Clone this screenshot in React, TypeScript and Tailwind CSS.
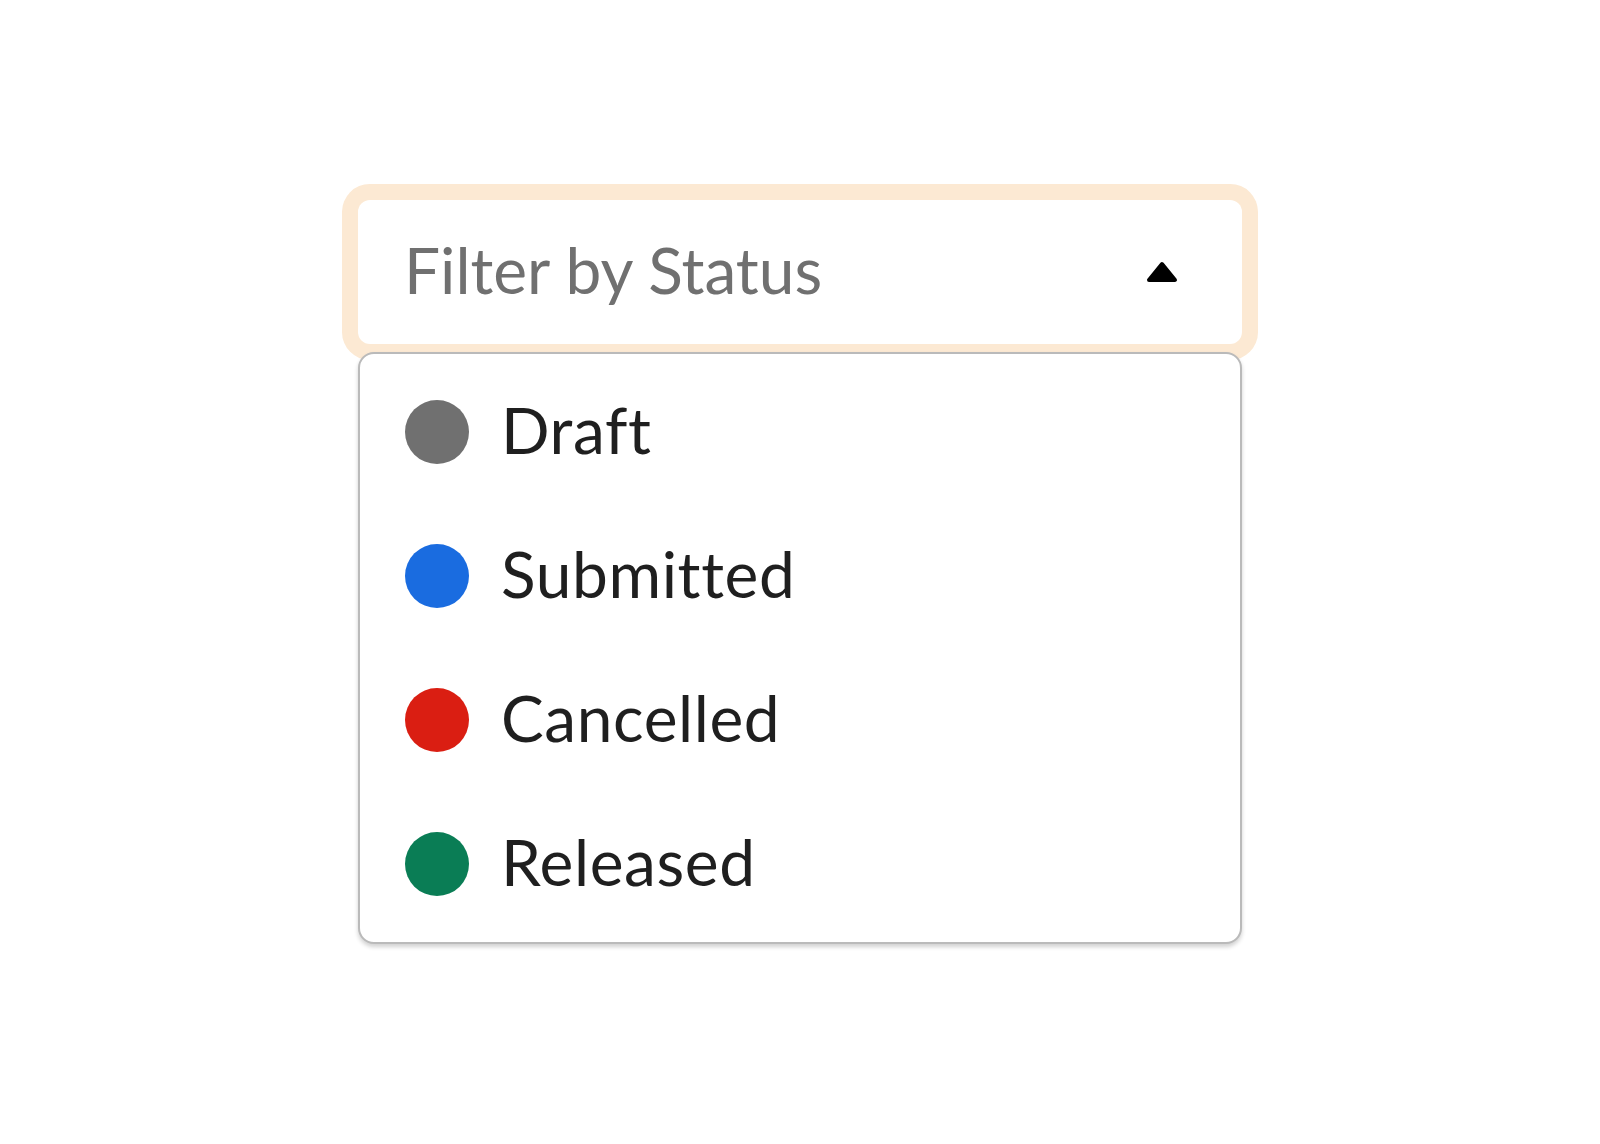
import React from "react";

const statuses = [
  { label: "Draft", dot: "bg-[#707070]" },
  { label: "Submitted", dot: "bg-[#1a6ce0]" },
  { label: "Cancelled", dot: "bg-[#da1e12]" },
  { label: "Released", dot: "bg-[#0a7d55]" },
];

const App = () => {
  return (
    <div className="min-h-screen bg-white pt-[200px] flex justify-center font-['Lato',sans-serif]">
      <div className="w-[884px]">
        <button className="w-full h-[144px] rounded-xl bg-white shadow-[0_0_0_16px_#fce9d3] flex items-center justify-between pl-[46px] pr-16">
          <span className="text-[64px] text-[#707070] leading-none pb-1">Filter by Status</span>
          <svg width="32" height="22" viewBox="0 0 32 22">
            <polygon points="16,3 29,19 3,19" fill="#000" stroke="#000" strokeWidth="4" strokeLinejoin="round" />
          </svg>
        </button>
        <ul className="relative mt-2 rounded-2xl border-2 border-[#bababa] bg-white py-1.5 shadow-[0_3px_4px_rgba(0,0,0,0.18)]">
          {statuses.map((s) => (
            <li key={s.label} className="h-[144px] flex items-center pl-[45px] gap-8">
              <span className={`w-16 h-16 rounded-full ${s.dot}`} />
              <span className="text-[64px] text-[#1f1f1f] leading-none tracking-[0.6px] pb-1">{s.label}</span>
            </li>
          ))}
        </ul>
      </div>
    </div>
  );
};

export default App;
